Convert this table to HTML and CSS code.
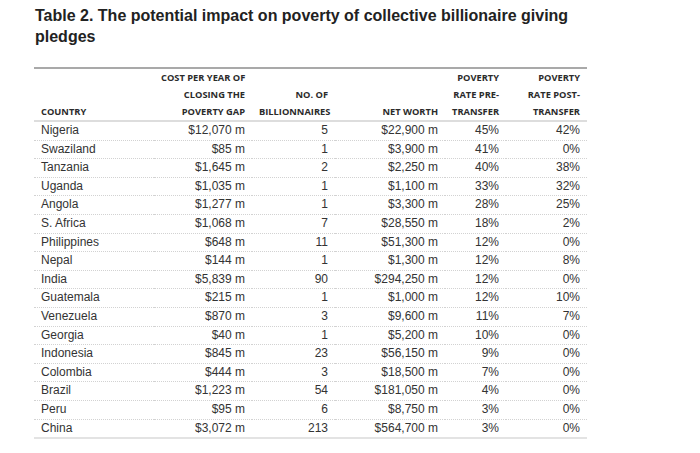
FILE: index.html
```html
<!DOCTYPE html>
<html>
<head>
<meta charset="utf-8">
<link rel="stylesheet" href="styles.css">
</head>
<body>
<div class="wrap">
  <h2 class="title">Table 2. The potential impact on poverty of collective billionaire giving pledges</h2>
  <table class="data">
    <colgroup>
      <col class="c1"><col class="c2"><col class="c3"><col class="c4"><col class="c5"><col class="c6">
    </colgroup>
    <thead>
      <tr>
        <th class="left">Country</th>
        <th>Cost per year of<br>closing the<br>poverty gap</th>
        <th>No. of<br>billionnaires</th>
        <th>Net worth</th>
        <th>Poverty<br>rate pre-<br>transfer</th>
        <th>Poverty<br>rate post-<br>transfer</th>
      </tr>
    </thead>
    <tbody>
      <tr><td class="left">Nigeria</td><td>$12,070 m</td><td>5</td><td>$22,900 m</td><td>45%</td><td>42%</td></tr>
      <tr><td class="left">Swaziland</td><td>$85 m</td><td>1</td><td>$3,900 m</td><td>41%</td><td>0%</td></tr>
      <tr><td class="left">Tanzania</td><td>$1,645 m</td><td>2</td><td>$2,250 m</td><td>40%</td><td>38%</td></tr>
      <tr><td class="left">Uganda</td><td>$1,035 m</td><td>1</td><td>$1,100 m</td><td>33%</td><td>32%</td></tr>
      <tr><td class="left">Angola</td><td>$1,277 m</td><td>1</td><td>$3,300 m</td><td>28%</td><td>25%</td></tr>
      <tr><td class="left">S. Africa</td><td>$1,068 m</td><td>7</td><td>$28,550 m</td><td>18%</td><td>2%</td></tr>
      <tr><td class="left">Philippines</td><td>$648 m</td><td>11</td><td>$51,300 m</td><td>12%</td><td>0%</td></tr>
      <tr><td class="left">Nepal</td><td>$144 m</td><td>1</td><td>$1,300 m</td><td>12%</td><td>8%</td></tr>
      <tr><td class="left">India</td><td>$5,839 m</td><td>90</td><td>$294,250 m</td><td>12%</td><td>0%</td></tr>
      <tr><td class="left">Guatemala</td><td>$215 m</td><td>1</td><td>$1,000 m</td><td>12%</td><td>10%</td></tr>
      <tr><td class="left">Venezuela</td><td>$870 m</td><td>3</td><td>$9,600 m</td><td>11%</td><td>7%</td></tr>
      <tr><td class="left">Georgia</td><td>$40 m</td><td>1</td><td>$5,200 m</td><td>10%</td><td>0%</td></tr>
      <tr><td class="left">Indonesia</td><td>$845 m</td><td>23</td><td>$56,150 m</td><td>9%</td><td>0%</td></tr>
      <tr><td class="left">Colombia</td><td>$444 m</td><td>3</td><td>$18,500 m</td><td>7%</td><td>0%</td></tr>
      <tr><td class="left">Brazil</td><td>$1,223 m</td><td>54</td><td>$181,050 m</td><td>4%</td><td>0%</td></tr>
      <tr><td class="left">Peru</td><td>$95 m</td><td>6</td><td>$8,750 m</td><td>3%</td><td>0%</td></tr>
      <tr><td class="left">China</td><td>$3,072 m</td><td>213</td><td>$564,700 m</td><td>3%</td><td>0%</td></tr>
    </tbody>
  </table>
</div>
</body>
</html>
```
FILE: styles.css
```css
html, body {
  margin: 0;
  padding: 0;
  background: #ffffff;
}
.wrap {
  padding: 5px 0 0 34px;
  width: 553px;
}
.title {
  margin: 0 0 20px 1px;
  font-family: "Liberation Sans", Arial, sans-serif;
  font-weight: bold;
  font-size: 16px;
  line-height: 21px;
  color: #222222;
  width: 540px;
}
.data {
  width: 553px;
  table-layout: fixed;
  border-collapse: collapse;
  border-top: 2px solid #a9a9a9;
  border-bottom: 2px solid #e3e3e3;
  font-family: "Liberation Sans", Arial, sans-serif;
  font-size: 12px;
  color: #333333;
}
.c1 { width: 120px; }
.c2 { width: 98px; }
.c3 { width: 83px; }
.c4 { width: 110px; }
.c5 { width: 61px; }
.c6 { width: 81px; }
.data th {
  font-family: "Open Sans", "Liberation Sans", sans-serif;
  font-weight: bold;
  font-size: 9.3px;
  line-height: 17px;
  text-transform: uppercase;
  text-align: right;
  vertical-align: bottom;
  padding: 0 7px;
  color: #2b2b2b;
  border-bottom: 2px solid #dddddd;
  white-space: nowrap;
}
.data td {
  padding: 0 7px;
  line-height: 17.6px;
  text-align: right;
  border-bottom: 1px dotted #d2d2d2;
}
.data tbody tr:last-child td {
  border-bottom: none;
}
.data .left {
  text-align: left;
}
```
